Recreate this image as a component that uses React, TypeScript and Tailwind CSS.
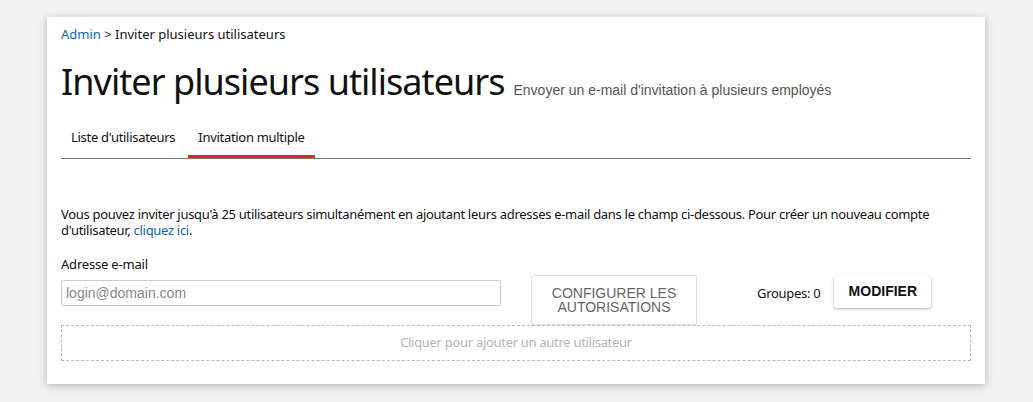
export default function App() {
  const segoe = { fontFamily: '"Noto Sans", "Open Sans", sans-serif' };
  const arial = { fontFamily: '"Liberation Sans", Arial, sans-serif' };
  return (
    <div className="min-h-[402px] w-[1033px] bg-[#f2f2f2] pt-[17px] pl-[47px]">
      <div
        className="w-[938px] h-[367px] bg-white px-[14px] shadow-[0_2px_8px_rgba(0,0,0,0.25)]"
        style={segoe}
      >
        <div className="pt-[8px] text-[13px] leading-[18px] text-[#111]">
          <span className="text-[#0b63b5]">Admin</span> &gt; Inviter plusieurs utilisateurs
        </div>

        <div className="mt-[17px] flex items-baseline gap-[9px]">
          <h1 className="text-[36px] leading-[44px] text-[#111] tracking-[-0.95px]">
            Inviter plusieurs utilisateurs
          </h1>
          <span className="text-[14px] text-[#555]" style={arial}>
            Envoyer un e-mail d'invitation à plusieurs employés
          </span>
        </div>

        <div className="mt-[16px] flex border-b border-[#777] text-[13px] tracking-[-0.3px] text-[#111]">
          <div className="px-[10px] pt-[8px] pb-[10px]">Liste d'utilisateurs</div>
          <div className="ml-[3px] border-b-[3px] border-[#d32f1f] px-[10px] pt-[8px] pb-[7px]">
            Invitation multiple
          </div>
        </div>

        <p className="mt-[47px] text-[13px] leading-[16px] tracking-[-0.3px] text-[#111]">
          Vous pouvez inviter jusqu'à 25 utilisateurs simultanément en ajoutant leurs adresses e-mail dans
          le champ ci-dessous. Pour créer un nouveau compte d'utilisateur,{" "}
          <a className="text-[#0b63b5]">cliquez ici</a>.
        </p>

        <div className="mt-[18px] text-[13px] leading-[16px] tracking-[-0.2px] text-[#111]">
          Adresse e-mail
        </div>

        <div className="mt-[3px] flex items-start">
          <input
            className="mt-[5px] h-[26px] w-[440px] rounded-[2px] border border-[#ccc] px-[4px] text-[14px] outline-none placeholder:text-[#888]"
            style={arial}
            placeholder="login@domain.com"
          />
          <button
            className="ml-[30px] h-[50px] w-[166px] rounded-[2px] border border-[#ddd] bg-white text-[14px] leading-[14px] text-[#666]"
            style={arial}
          >
            CONFIGURER LES
            <br />
            AUTORISATIONS
          </button>
          <div className="ml-[60px] mt-[9px] text-[13px] tracking-[-0.3px] text-[#111]">Groupes: 0</div>
          <button
            className="ml-[14px] mt-[1px] h-[32px] w-[97px] rounded-[3px] bg-white text-[14px] font-bold text-[#111] shadow-[0_1px_3px_rgba(0,0,0,0.3)]"
            style={arial}
          >
            MODIFIER
          </button>
        </div>

        <div className="flex h-[36px] w-[910px] items-center justify-center border border-dashed border-[#bbb] text-[13px] tracking-[-0.3px] text-[#b5b5b5]">
          Cliquer pour ajouter un autre utilisateur
        </div>
      </div>
    </div>
  );
}
